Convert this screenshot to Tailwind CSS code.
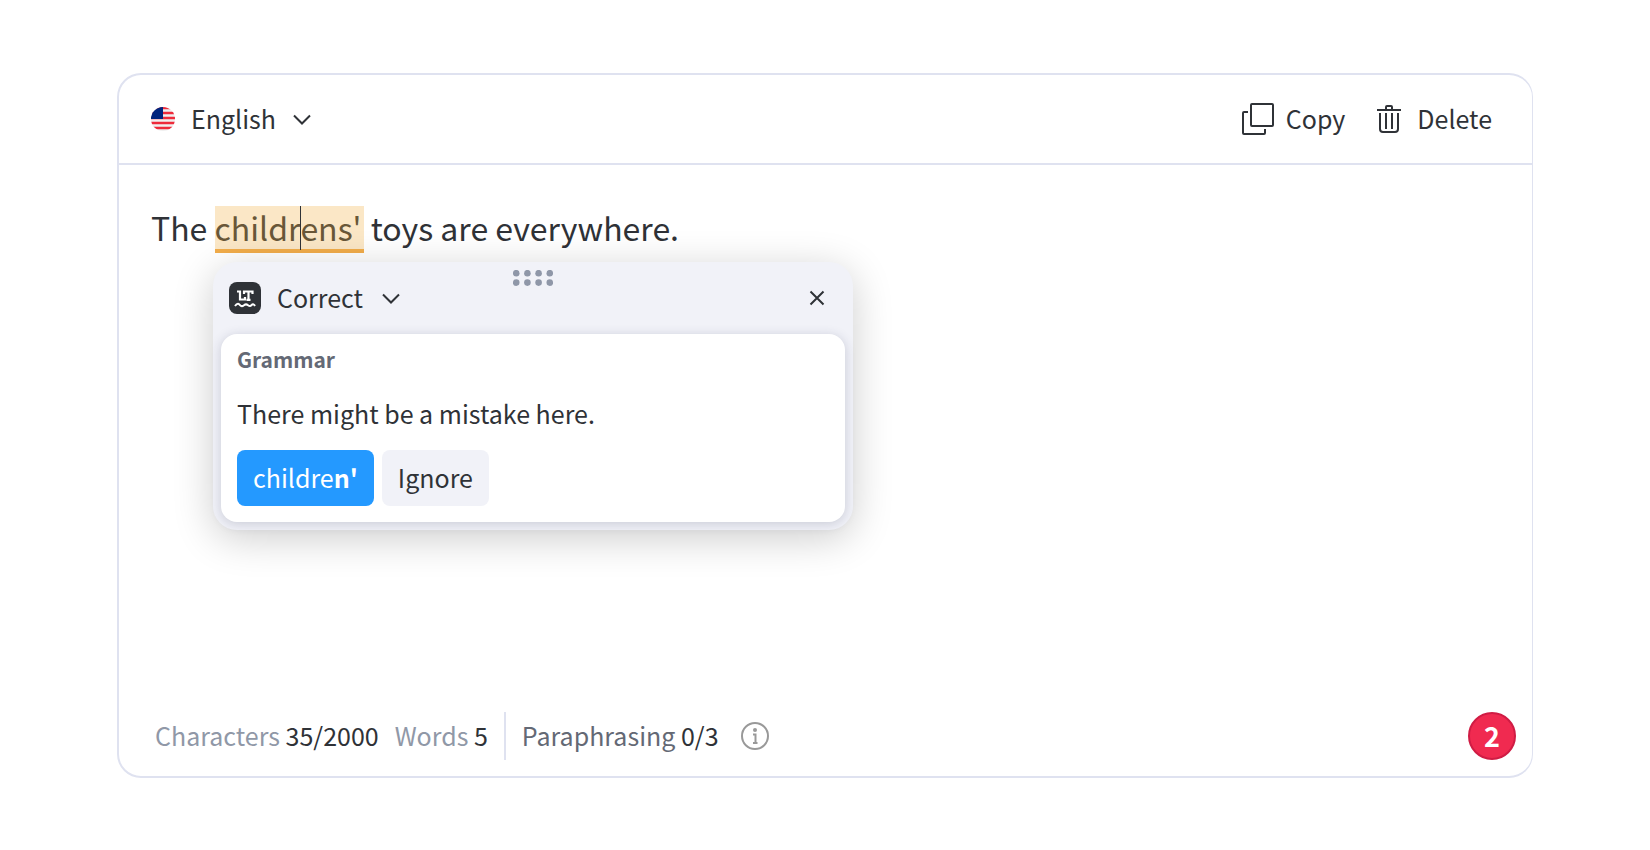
<!DOCTYPE html>
<html lang="en">
  <head>
    <meta charset="UTF-8" />
    <meta name="viewport" content="width=device-width, initial-scale=1.0" />
    <script src="https://cdn.jsdelivr.net/npm/@tailwindcss/browser@4"></script>
    <title>Grammar Checker</title>
  </head>
  <body
    class="bg-white px-[117px] py-[73px] font-['Noto_Sans_CJK_SC','Noto_Sans',sans-serif] text-[25px] leading-8 text-[#2f3237]"
  >
    <div
      class="flex min-h-[705px] flex-col rounded-3xl border-2 border-r border-[#dfe2f0] bg-white"
    >
      <!-- Toolbar -->
      <header
        class="flex h-[90px] items-center justify-between border-b-2 border-[#dfe2f0] pr-10 pl-8"
      >
        <button type="button" class="flex items-center">
          <svg class="size-6" viewBox="0 0 24 24" aria-hidden="true">
            <clipPath id="flagClip"><circle cx="12" cy="12" r="12" /></clipPath>
            <g clip-path="url(#flagClip)">
              <rect width="24" height="24" fill="#f0f0f0" />
              <path
                d="M0 1h24M0 6h24M0 11h24M0 16h24M0 21h24"
                stroke="#ee2b3b"
                stroke-width="2.5"
              />
              <rect width="12" height="12" fill="#00247d" />
            </g>
          </svg>
          <span class="ml-4 pb-0.5">English</span>
          <svg
            class="ml-3.5 size-6"
            viewBox="0 0 24 24"
            fill="none"
            stroke="currentColor"
            stroke-width="2"
            aria-hidden="true"
          >
            <path d="M4 8.5l8 8 8-8" />
          </svg>
        </button>

        <div class="flex items-center gap-8">
          <button type="button" class="flex items-center gap-3">
            <svg
              class="size-8"
              viewBox="0 0 32 32"
              fill="none"
              stroke="currentColor"
              stroke-width="2"
              aria-hidden="true"
            >
              <rect x="9" y="1" width="22" height="22" rx="1" />
              <path d="M6 9H2a1 1 0 0 0-1 1v20a1 1 0 0 0 1 1h20a1 1 0 0 0 1-1v-4" />
            </svg>
            <span class="pb-0.5">Copy</span>
          </button>
          <button type="button" class="flex items-center gap-4">
            <svg
              class="h-7 w-6"
              viewBox="0 0 24 28"
              fill="none"
              stroke="currentColor"
              stroke-width="2"
              aria-hidden="true"
            >
              <path d="M0 5h24M9 5V2a1 1 0 0 1 1-1h4a1 1 0 0 1 1 1v3" />
              <path d="M3 8v16a3 3 0 0 0 3 3h12a3 3 0 0 0 3-3V8" />
              <path d="M9 8v16M15 8v16" />
            </svg>
            <span class="pb-0.5">Delete</span>
          </button>
        </div>
      </header>

      <!-- Editor -->
      <main class="relative flex-1 px-8 pt-[38px]">
        <p class="text-[32px] leading-12">
          The
          <mark
            class="relative inline-block border-b-4 border-[#f2ad4a] bg-[#fbe7c6] pr-0.5 leading-[43px] text-[#695738]"
            >childr<span
              class="absolute top-0 h-11 w-px bg-[#2f3237]"
            ></span
            >ens'</mark
          >
          toys are everywhere.
        </p>

        <!-- Suggestion popup -->
        <section
          class="absolute top-[97px] left-[94px] w-[640px] rounded-3xl bg-[#f1f2f8] p-2 shadow-[0_8px_40px_rgba(0,0,0,0.2)]"
          aria-label="Suggestion"
        >
          <svg
            class="absolute top-2 left-1/2 h-4 w-10 -translate-x-1/2"
            viewBox="0 0 40 16"
            fill="#8f97a8"
            aria-hidden="true"
          >
            <circle cx="3.2" cy="3.2" r="3.3" />
            <circle cx="14.4" cy="3.2" r="3.3" />
            <circle cx="25.6" cy="3.2" r="3.3" />
            <circle cx="36.8" cy="3.2" r="3.3" />
            <circle cx="3.2" cy="12.6" r="3.3" />
            <circle cx="14.4" cy="12.6" r="3.3" />
            <circle cx="25.6" cy="12.6" r="3.3" />
            <circle cx="36.8" cy="12.6" r="3.3" />
          </svg>
          <div class="flex h-16 items-center justify-between pr-5 pb-2 pl-2">
            <button type="button" class="flex items-center">
              <svg class="size-8" viewBox="0 0 32 32" fill="none" aria-hidden="true">
                <rect width="32" height="32" rx="8" fill="#2f3237" />
                <path
                  d="M8 9.5h3V17.5h5v-2.500M15 12V9.500h8.500V12M19.500 9.500V18M17.500 17.800h4"
                  stroke="#fff"
                  stroke-width="2.2"
                />
                <path
                  d="M6 24c2.5-3.5 4-2 5-.8s2.5 1.2 4 0 2.500-1.200 4 0 2.500 1.200 3.500 0 2.200-1.500 3.500.8"
                  stroke="#fff"
                  stroke-width="2"
                />
              </svg>
              <span class="ml-4 pb-0.5">Correct</span>
              <svg
                class="ml-4 size-6"
                viewBox="0 0 24 24"
                fill="none"
                stroke="currentColor"
                stroke-width="2"
                aria-hidden="true"
              >
                <path d="M4 8.5l8 8 8-8" />
              </svg>
            </button>
            <button type="button" aria-label="Close">
              <svg
                class="size-4"
                viewBox="0 0 16 16"
                fill="none"
                stroke="currentColor"
                stroke-width="2"
                aria-hidden="true"
              >
                <path d="M1.5 1.5l13 13M14.5 1.5l-13 13" />
              </svg>
            </button>
          </div>

          <div
            class="rounded-2xl bg-white px-4 pt-[9px] pb-4 shadow-[0_2px_12px_rgba(40,45,80,0.2)]"
          >
            <h2 class="text-[21px] font-bold text-[#646975]">Grammar</h2>
            <p class="mt-[22px]">There might be a mistake here.</p>
            <div class="mt-[21px] flex gap-2">
              <button
                type="button"
                class="h-14 rounded-lg bg-[#2499ff] px-4 pb-0.5 text-white"
              >
                childre<b>n'</b>
              </button>
              <button
                type="button"
                class="h-14 rounded-lg bg-[#f1f2f8] px-4 pb-0.5"
              >
                Ignore
              </button>
            </div>
          </div>
        </section>
      </main>

      <!-- Status bar -->
      <footer class="flex items-center justify-between pr-4 pb-4 pl-9">
        <div class="flex items-center gap-4">
          <p class="pb-0.5">
            <span class="text-[#9098a7]">Characters</span> 35/2000
          </p>
          <p class="pb-0.5"><span class="text-[#9098a7]">Words</span> 5</p>
          <p class="h-12 border-l-2 border-[#dfe2f0] pl-4 leading-[46px]">
            <span class="text-[#646975]">Paraphrasing</span> 0/3
          </p>
          <button type="button" class="ml-1.5" aria-label="Paraphrasing info">
            <svg class="size-7" viewBox="0 0 28 28" fill="none" aria-hidden="true">
              <circle cx="14" cy="14" r="13" stroke="#999" stroke-width="2" />
              <circle cx="14" cy="8" r="2" fill="#999" />
              <path
                d="M12 12.5h2.5V21M12 21h4.5"
                stroke="#999"
                stroke-width="2"
              />
            </svg>
          </button>
        </div>
        <button
          type="button"
          class="size-12 rounded-full border-2 border-[#d01c44] bg-[#f02a50] text-[27px] font-bold text-white"
          aria-label="2 issues found"
        >
          2
        </button>
      </footer>
    </div>
  </body>
</html>
